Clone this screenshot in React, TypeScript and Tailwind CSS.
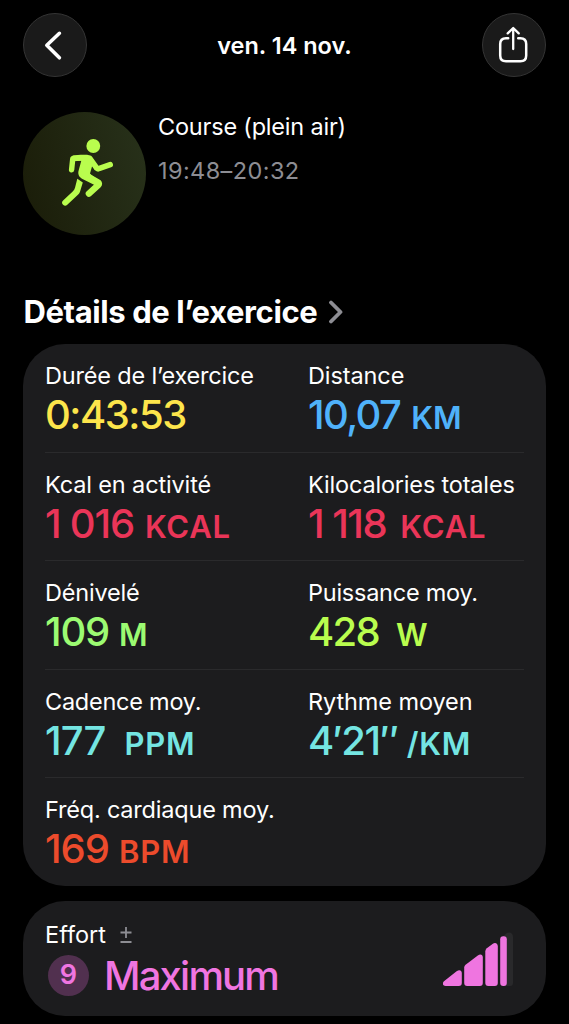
type Metric = {
  label: string;
  value: string;
  unit?: string;
  color: string;
  labelClass: string;
  valueClass: string;
  unitClass?: string;
};

const rows: Metric[][] = [
  [
    {
      label: "Durée de l’exercice",
      value: "0:43:53",
      color: "text-[#fde54b]",
      labelClass: "tracking-[-0.18px]",
      valueClass: "tracking-[-1.5px]",
    },
    {
      label: "Distance",
      value: "10,07",
      unit: "KM",
      color: "text-[#4fb2fa]",
      labelClass: "tracking-[-0.1px]",
      valueClass: "tracking-[-1.6px]",
      unitClass: "ml-[11px]",
    },
  ],
  [
    {
      label: "Kcal en activité",
      value: "1 016",
      unit: "KCAL",
      color: "text-[#ea3558]",
      labelClass: "tracking-[-0.14px]",
      valueClass: "tracking-[-1.2px]",
      unitClass: "ml-[11px] tracking-[0.8px]",
    },
    {
      label: "Kilocalories totales",
      value: "1 118",
      unit: "KCAL",
      color: "text-[#ea3558]",
      labelClass: "tracking-[-0.18px]",
      valueClass: "tracking-[-1.5px]",
      unitClass: "ml-[14px] tracking-[0.9px]",
    },
  ],
  [
    {
      label: "Dénivelé",
      value: "109",
      unit: "M",
      color: "text-[#9cfb72]",
      labelClass: "tracking-[-0.2px]",
      valueClass: "tracking-[-1.2px]",
      unitClass: "ml-[10px]",
    },
    {
      label: "Puissance moy.",
      value: "428",
      unit: "W",
      color: "text-[#b9fd4e]",
      labelClass: "tracking-[-0.25px]",
      valueClass: "tracking-[-1.7px]",
      unitClass: "ml-[17px]",
    },
  ],
  [
    {
      label: "Cadence moy.",
      value: "177",
      unit: "PPM",
      color: "text-[#74e5e2]",
      labelClass: "tracking-[-0.25px]",
      valueClass: "tracking-[-0.9px]",
      unitClass: "ml-[19px] tracking-[0.8px]",
    },
    {
      label: "Rythme moyen",
      value: "4′21″",
      unit: "/KM",
      color: "text-[#74e5e2]",
      labelClass: "tracking-[-0.1px]",
      valueClass: "tracking-[-1.3px]",
      unitClass: "ml-[9px] tracking-[0.8px]",
    },
  ],
  [
    {
      label: "Fréq. cardiaque moy.",
      value: "169",
      unit: "BPM",
      color: "text-[#ec4b2c]",
      labelClass: "tracking-[-0.2px]",
      valueClass: "tracking-[-1px]",
      unitClass: "ml-[10px] tracking-[0.8px]",
    },
  ],
];

function MetricCell({ metric }: { metric: Metric }) {
  return (
    <div className="pt-[14px] whitespace-nowrap">
      <p className={`text-[23.5px] leading-9 text-white ${metric.labelClass}`}>{metric.label}</p>
      <p className={`-mt-px flex items-baseline font-medium leading-[44px] ${metric.color}`}>
        <span className={`text-[40px] ${metric.valueClass}`}>{metric.value}</span>
        {metric.unit && <span className={`text-[31px] font-semibold ${metric.unitClass}`}>{metric.unit}</span>}
      </p>
    </div>
  );
}

function RunnerIcon() {
  return (
    <svg viewBox="0 0 123 123" className="size-full" fill="none" stroke="#b9fd4e" strokeLinecap="round" strokeLinejoin="round">
      <circle cx="70.3" cy="34" r="6.9" fill="#b9fd4e" stroke="none" />
      {/* torso, arms and front leg */}
      <path
        d="M49.5 43.6 C54 42.8 60 42.4 64 42.8 C67 43.1 69 45 70.6 48.2 L74.5 55 L72 58.5 L69.3 53.5 L67 61.5 C69 64 74.5 67 77.5 69 L72 73.2 L60 67.3 C56 65.2 54.8 62.4 55.5 59 L58.3 48.7 L50 49.2 Z"
        fill="#b9fd4e"
        stroke="none"
      />
      <path d="M60 45.9 L50.4 46.4 Q49.8 46.4 49.7 47.3 L48.6 57.8" strokeWidth="5.4" />
      <path d="M66.8 46.5 L73.4 55.6 Q74.7 57.4 76.5 56.4 L87.2 52.7" strokeWidth="5.6" />
      <path d="M60.8 62.3 L75.2 70.5 Q76.7 71.8 75.2 73.2 L65.9 81.7" strokeWidth="6.4" />
      {/* back leg */}
      <path d="M54.3 66.7 L59.8 70.4 L57 79.8 Q56.5 81.3 55.2 82.5 L44.3 92.7 A3 3 0 0 1 40.1 88.4 L49.7 79.4 Q51.5 77.7 52 75.7 Z" fill="#b9fd4e" stroke="none" />
    </svg>
  );
}

function EffortBars() {
  return (
    <svg viewBox="0 0 72 58" className="h-[58px] w-[72px]">
      <path d="M60 7 C63 1 70 1 70 7 V53 Q70 56 67 56 H60 Z" fill="#29292b" />
      <g fill="#ef75e0">
        <path d="M1.3 51 L13.6 41.2 C16.5 39 18.8 40.5 18.8 43 V53 Q18.8 56 15.8 56 H2.6 C-0.8 56 -0.8 52.6 1.3 51 Z" />
        <path d="M21.2 37.5 Q21.2 35.8 22.6 34.7 L34.8 25.4 C37.5 23.4 39.8 24.5 39.8 27.5 V53 Q39.8 56 36.8 56 H24.2 Q21.2 56 21.2 53 Z" />
        <path d="M42.3 21.5 Q42.3 19.5 43.8 18.3 L49.5 14 C52.3 12 54.8 13.5 54.8 16.5 V53 Q54.8 56 51.8 56 H45.3 Q42.3 56 42.3 53 Z" />
        <rect x="57.2" y="6.2" width="6.6" height="49.8" rx="3" />
      </g>
    </svg>
  );
}

export default function App() {
  return (
    <main className="h-screen overflow-hidden bg-black px-6 font-['Inter',sans-serif] text-white">
      <header className="flex items-center justify-between pt-[13px]">
        <button className="-ml-px flex size-16 items-center justify-center rounded-full border border-[#343434] bg-[#1a1a1a]">
          <svg viewBox="0 0 64 64" className="size-16 shrink-0" fill="none" stroke="#fff" strokeWidth="3.6" strokeLinecap="round" strokeLinejoin="round">
            <path d="M36.4 20.3 L23.8 32.2 L36.4 44.8" />
          </svg>
        </button>
        <h1 className="pt-0.5 text-[23.5px] font-semibold">ven. 14 nov.</h1>
        <button className="-mr-px flex size-16 items-center justify-center rounded-full border border-[#343434] bg-[#1a1a1a]">
          <svg viewBox="0 0 64 64" className="size-16 shrink-0" fill="none" stroke="#fff" strokeWidth="2.5" strokeLinecap="round" strokeLinejoin="round">
            <path d="M26.2 25.2 H24 Q18.2 25.2 18.2 31 V42.5 Q18.2 48.3 24 48.3 H38.4 Q44.2 48.3 44.2 42.5 V31 Q44.2 25.2 38.4 25.2 H36.2" />
            <path d="M31.2 36 V15.3 M25.7 20.4 L31.2 15 L36.7 20.4" strokeWidth="2.3" />
          </svg>
        </button>
      </header>

      <section className="mt-[35px] flex gap-3">
        <div className="-ml-px size-[123px] rounded-full bg-linear-75 from-[#1a1c08] to-[#28321b]">
          <RunnerIcon />
        </div>
        <div className="whitespace-nowrap">
          <h2 className="text-[23.5px] leading-[30px] tracking-[-0.2px]">Course (plein air)</h2>
          <p className="mt-[14px] text-[23.5px] leading-[30px] tracking-[0.4px] text-[#8d8d93]">19:48–20:32</p>
        </div>
      </section>

      <h2 className="mt-[57px] -ml-[0.5px] flex h-10 items-center whitespace-nowrap text-[31px] font-bold tracking-[-0.4px]">
        Détails de l’exercice
        <svg viewBox="0 0 16 24" className="ml-[11px] h-6 w-4" fill="none" stroke="#8d8d93" strokeWidth="3.8" strokeLinecap="round" strokeLinejoin="round">
          <path d="M3 2.5 L12.5 12 L3 21.5" />
        </svg>
      </h2>

      <section className="mt-3 -ml-px h-[542px] w-[523px] rounded-[42px] bg-[#1c1c1e] px-[22px]">
        {rows.map((row, i) => (
          <div
            key={row[0].label}
            className={`grid h-[108.6px] grid-cols-[263px_1fr] ${i < rows.length - 1 ? "border-b border-[#2a2a2c]" : ""}`}
          >
            {row.map((metric) => (
              <MetricCell key={metric.label} metric={metric} />
            ))}
          </div>
        ))}
      </section>

      <section className="mt-[15px] -ml-px flex h-[115px] w-[523px] justify-between rounded-[42px] bg-[#1c1c1e] pt-4 pr-[31px] pl-[22px]">
        <div>
          <p className="flex items-center text-[23.5px] leading-9">
            Effort
            <svg viewBox="0 0 12 18" className="ml-[14px] h-[18px] w-3" stroke="#8d8d93" strokeWidth="1.8">
              <path d="M6 1 V12 M0.5 6.5 H11.5 M0.5 16 H11.5" />
            </svg>
          </p>
          <div className="flex items-center text-[#f075e1]">
            <span className="ml-[3px] flex size-[41px] items-center justify-center rounded-full bg-[#51304f] pt-px text-[27px] font-semibold">9</span>
            <span className="ml-[15px] pt-0.5 text-[40px] leading-[42px] font-medium tracking-[-1.8px]">Maximum</span>
          </div>
        </div>
        <div className="mt-[13px]">
          <EffortBars />
        </div>
      </section>
    </main>
  );
}
